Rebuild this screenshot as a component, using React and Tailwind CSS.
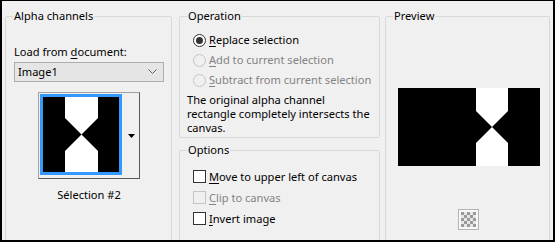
import React from "react";

function Radio({ checked, disabled, children }) {
  return (
    <div className="flex h-[20px] items-center">
      <span
        className={
          "flex h-[13px] w-[13px] shrink-0 items-center justify-center rounded-full border " +
          (disabled ? "border-[#c5c5c5] bg-[#f0f0f0]" : "border-[#333333] bg-white")
        }
      >
        {checked && <span className="h-[7px] w-[7px] rounded-full bg-[#333333]" />}
      </span>
      <span className={"ml-[3px] whitespace-nowrap " + (disabled ? "text-[#838383]" : "text-black")}>
        {children}
      </span>
    </div>
  );
}

function Check({ disabled, children }) {
  return (
    <div className="flex h-[21px] items-center">
      <span
        className={
          "h-[13px] w-[13px] shrink-0 border " +
          (disabled ? "border-[#c5c5c5] bg-[#f0f0f0]" : "border-[#333333] bg-white")
        }
      />
      <span className={"ml-[3px] whitespace-nowrap " + (disabled ? "text-[#838383]" : "text-black")}>
        {children}
      </span>
    </div>
  );
}

function Group({ title, className, children }) {
  return (
    <fieldset className={"rounded-[2px] border border-[#d9d9d9] " + className}>
      <legend className="ml-[7px] px-[1px] leading-[16px] whitespace-nowrap">{title}</legend>
      {children}
    </fieldset>
  );
}

export default function App() {
  return (
    <div className="h-[242px] w-[555px] overflow-hidden border-t border-r-2 border-b-2 border-l-2 border-black bg-[#f0f0f0] pt-[7px] pl-[3px] font-['Noto_Sans',sans-serif] text-[11.1px] leading-[16px] text-black">
      <div className="flex">
        <Group title="Alpha channels" className="h-[260px] w-[167px] shrink-0">
          <div className="flex flex-col">
            <p className="mt-[20px] pl-[8px] whitespace-nowrap">
              Load from <u className="underline-offset-2">d</u>ocument:
            </p>
            <div className="mt-[2px] ml-[8px] flex h-[20px] w-[150px] items-center justify-between border border-[#adadad] bg-[#e5e5e5] pr-[6px] pl-[3px]">
              <span>Image1</span>
              <svg width="9" height="6" viewBox="0 0 9 6">
                <path d="M0.5 0.5 L4.5 4.5 L8.5 0.5" fill="none" stroke="#606060" strokeWidth="1" />
              </svg>
            </div>
            <div className="mt-[10px] ml-[32px] flex h-[87px] w-[102px] border border-t-[#a0a0a0] border-r-[#5a5a5a] border-b-[#5a5a5a] border-l-[#a0a0a0] bg-[#f0f0f0]">
              <div className="p-[1px]">
                <div className="border-[3px] border-[#3399ff]">
                  <svg width="76" height="75" viewBox="0 0 76 75" className="block">
                    <rect width="76" height="75" fill="#000" />
                    <polygon
                      points="22,0 55,0 55,21 38.5,37.5 55,54 55,75 22,75 22,54 38.5,37.5 22,21"
                      fill="#fff"
                    />
                  </svg>
                </div>
              </div>
              <div className="flex flex-1 items-center justify-center">
                <svg width="7" height="4" viewBox="0 0 7 4">
                  <path d="M0 0 H7 L3.5 4 Z" fill="#000" />
                </svg>
              </div>
            </div>
            <p className="mt-[8px] ml-[32px] w-[102px] text-center whitespace-nowrap">Sélection #2</p>
          </div>
        </Group>

        <div className="ml-[7px] flex w-[201px] shrink-0 flex-col">
          <Group title="Operation" className="h-[130px]">
            <div className="mt-[6px] pl-[13px]">
              <Radio checked>
                <u className="underline-offset-2">R</u>eplace selection
              </Radio>
              <Radio disabled>
                <u className="underline-offset-2">A</u>dd to current selection
              </Radio>
              <Radio disabled>
                <u className="underline-offset-2">S</u>ubtract from current selection
              </Radio>
            </div>
            <p className="mt-[3px] pl-[7px] leading-[14px] whitespace-nowrap">
              The original alpha channel
              <br />
              rectangle completely intersects the
              <br />
              canvas.
            </p>
          </Group>
          <Group title="Options" className="mt-[4px] h-[120px]">
            <div className="mt-[8px] pl-[13px]">
              <Check>
                <u className="underline-offset-2">M</u>ove to upper left of canvas
              </Check>
              <Check disabled>
                <u className="underline-offset-2">C</u>lip to canvas
              </Check>
              <Check>
                <u className="underline-offset-2">I</u>nvert image
              </Check>
            </div>
          </Group>
        </div>

        <Group title="Preview" className="ml-[5px] h-[260px] w-[165px] shrink-0">
          <div className="flex flex-col">
            <svg width="142" height="78" viewBox="0 0 142 78" className="mt-[64px] ml-[12px] block">
              <rect width="142" height="78" fill="#000" />
              <polygon
                points="78,0 110,0 110,23 94,39 110,55 110,78 78,78 78,55 94,39 78,23"
                fill="#fff"
              />
            </svg>
            <svg width="21" height="21" viewBox="0 0 21 21" className="mt-[43px] ml-[72px] block">
              <rect x="0.5" y="0.5" width="20" height="20" fill="#f7f7f7" stroke="#b4b4b4" />
              <rect x="3" y="3" width="15" height="15" fill="#e6e6e6" />
              <rect x="3" y="3" width="3" height="3" fill="#9a9a9a" />
              <rect x="9" y="3" width="3" height="3" fill="#9a9a9a" />
              <rect x="15" y="3" width="3" height="3" fill="#9a9a9a" />
              <rect x="6" y="6" width="3" height="3" fill="#9a9a9a" />
              <rect x="12" y="6" width="3" height="3" fill="#9a9a9a" />
              <rect x="3" y="9" width="3" height="3" fill="#9a9a9a" />
              <rect x="9" y="9" width="3" height="3" fill="#9a9a9a" />
              <rect x="15" y="9" width="3" height="3" fill="#9a9a9a" />
              <rect x="6" y="12" width="3" height="3" fill="#9a9a9a" />
              <rect x="12" y="12" width="3" height="3" fill="#9a9a9a" />
              <rect x="3" y="15" width="3" height="3" fill="#9a9a9a" />
              <rect x="9" y="15" width="3" height="3" fill="#9a9a9a" />
              <rect x="15" y="15" width="3" height="3" fill="#9a9a9a" />
            </svg>
          </div>
        </Group>
      </div>
    </div>
  );
}
